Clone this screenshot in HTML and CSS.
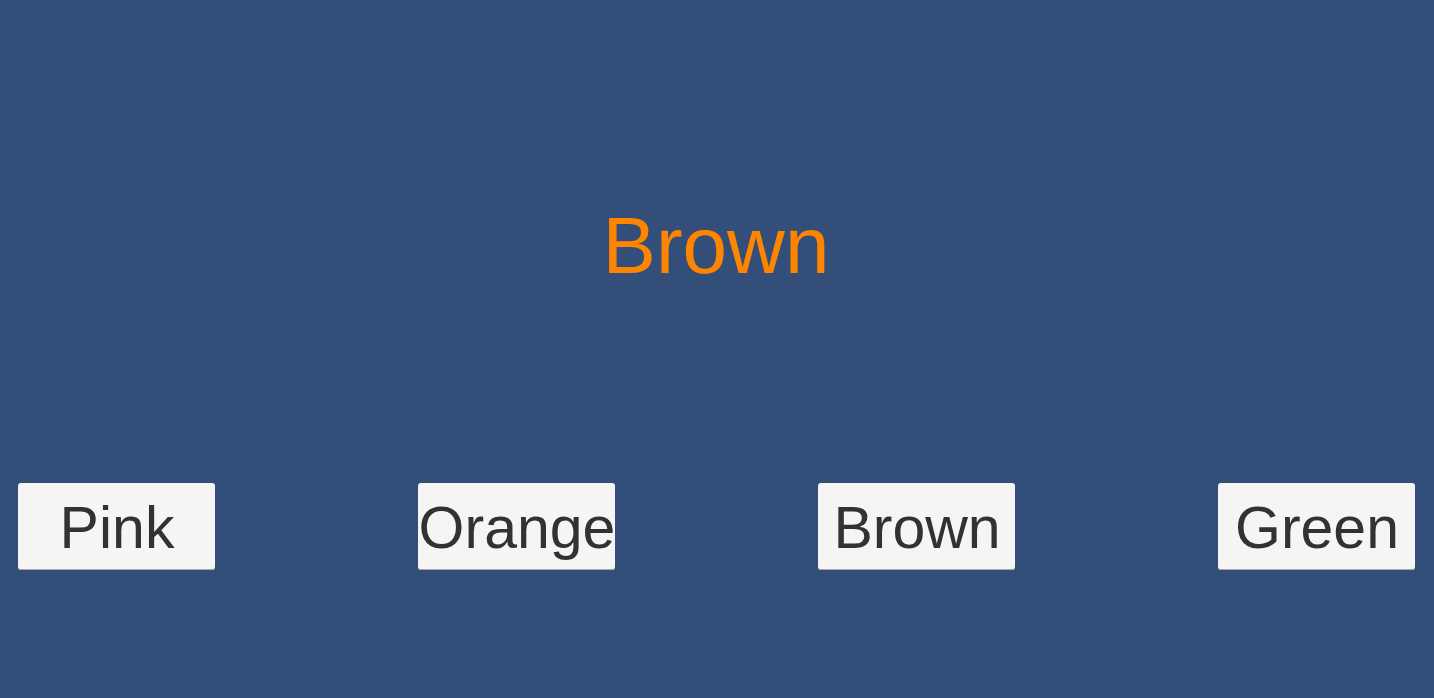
FILE: index.html
```html
<!DOCTYPE html>
<html>
<head>
<meta charset="utf-8">
<link rel="stylesheet" href="styles.css">
</head>
<body>
<main class="screen">
  <div class="title">Brown</div>
  <div class="choices">
    <button class="choice">Pink</button>
    <button class="choice">Orange</button>
    <button class="choice">Brown</button>
    <button class="choice">Green</button>
  </div>
</main>
</body>
</html>
```
FILE: styles.css
```css
html, body {
  margin: 0;
  padding: 0;
  height: 100%;
  background: #334f79;
}
.screen {
  height: 698px;
  padding-top: 206px;
  box-sizing: border-box;
  font-family: "Liberation Sans", Arial, sans-serif;
}
.title {
  height: 80px;
  line-height: 80px;
  font-size: 80px;
  color: #ff8500;
  text-align: center;
  padding-right: 2px;
}
.choices {
  margin-top: 197px;
  padding: 0 19px 0 18px;
  display: flex;
  justify-content: space-between;
}
.choice {
  width: 197px;
  height: 87px;
  margin: 0;
  padding: 3px 0 0 1px;
  box-sizing: border-box;
  border: none;
  border-radius: 3px;
  background: #f5f5f5;
  box-shadow: inset 0 -1px 0 #a8a8a8;
  color: #323232;
  font-family: "Liberation Sans", Arial, sans-serif;
  font-size: 59px;
  line-height: 84px;
  display: flex;
  align-items: center;
  justify-content: center;
  white-space: nowrap;
  overflow: visible;
}
```
